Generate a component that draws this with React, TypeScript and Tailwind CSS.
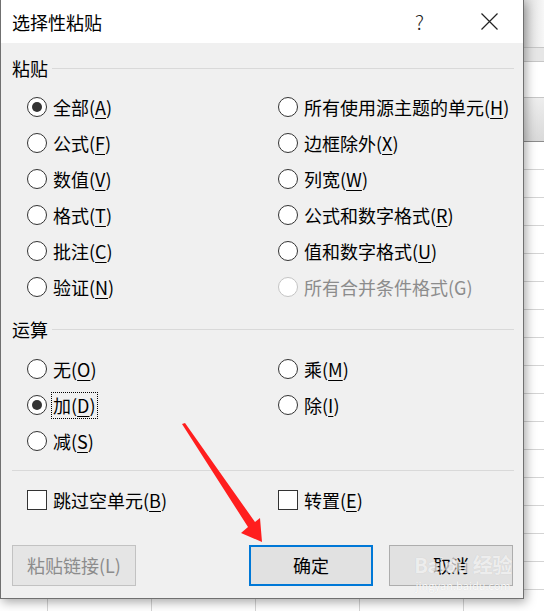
import React from 'react';

type Opt = { label: string; key?: string; checked?: boolean; disabled?: boolean; focus?: boolean };

const pasteLeft: Opt[] = [
  { label: '全部', key: 'A', checked: true },
  { label: '公式', key: 'F' },
  { label: '数值', key: 'V' },
  { label: '格式', key: 'T' },
  { label: '批注', key: 'C' },
  { label: '验证', key: 'N' },
];

const pasteRight: Opt[] = [
  { label: '所有使用源主题的单元', key: 'H' },
  { label: '边框除外', key: 'X' },
  { label: '列宽', key: 'W' },
  { label: '公式和数字格式', key: 'R' },
  { label: '值和数字格式', key: 'U' },
  { label: '所有合并条件格式(G)', disabled: true },
];

const opLeft: Opt[] = [
  { label: '无', key: 'O' },
  { label: '加', key: 'D', checked: true, focus: true },
  { label: '减', key: 'S' },
];

const opRight: Opt[] = [
  { label: '乘', key: 'M' },
  { label: '除', key: 'I' },
];

function Label({ opt }: { opt: Opt }) {
  const text = opt.key ? (
    <>
      {opt.label}(<span className="underline underline-offset-[3px] decoration-1">{opt.key}</span>)
    </>
  ) : (
    opt.label
  );
  if (opt.focus) {
    return (
      <span className="ml-[4px] px-[1px] border border-dotted border-black leading-[25px] whitespace-nowrap">
        {text}
      </span>
    );
  }
  return (
    <span className={`ml-[6px] whitespace-nowrap ${opt.disabled ? 'text-[#8c8c8c]' : 'text-black'}`}>
      {text}
    </span>
  );
}

function Radio({ opt }: { opt: Opt }) {
  return (
    <div className="h-[36px] flex items-center">
      <span
        className={`w-[20px] h-[20px] rounded-full border bg-white flex items-center justify-center shrink-0 ${
          opt.disabled ? 'border-[#c4c4c4]' : 'border-[#333333]'
        }`}
      >
        {opt.checked && <span className="w-[10px] h-[10px] rounded-full bg-[#333333]" />}
      </span>
      <Label opt={opt} />
    </div>
  );
}

function Check({ opt }: { opt: Opt }) {
  return (
    <div className="h-[36px] flex items-center">
      <span className="w-[20px] h-[20px] border border-[#333333] bg-white shrink-0" />
      <Label opt={opt} />
    </div>
  );
}

function SectionHead({ title }: { title: string }) {
  return (
    <div className="h-[24px] flex items-center">
      <span className="leading-[24px]">{title}</span>
      <span className="flex-1 h-px bg-[#d9d9d9] ml-[4px]" />
    </div>
  );
}

function Columns({ left, right }: { left: Opt[]; right: Opt[] }) {
  return (
    <div className="flex pl-[15px]">
      <div className="w-[251px] flex flex-col">
        {left.map((o) => (
          <Radio key={o.label} opt={o} />
        ))}
      </div>
      <div className="flex-1 flex flex-col">
        {right.map((o) => (
          <Radio key={o.label} opt={o} />
        ))}
      </div>
    </div>
  );
}

function Dialog() {
  return (
    <div className="relative z-10 w-[524px] h-[599px] bg-[#f0f0f0] border-x border-b border-[#707070] shadow-[2px_3px_10px_rgba(0,0,0,0.35)] flex flex-col text-[18px]">
      {/* 标题栏 */}
      <div className="h-[43px] bg-white flex items-center pl-[11px] pr-[25px] shrink-0">
        <span className="text-[18px] leading-[24px] flex-1">选择性粘贴</span>
        <span className="text-[20px] leading-[24px] font-light text-[#222] mr-[57px]">?</span>
        <svg width="17" height="17" viewBox="0 0 17 17">
          <path d="M0.5 0.5 L16.5 16.5 M16.5 0.5 L0.5 16.5" stroke="#222" strokeWidth="1.2" />
        </svg>
      </div>

      <div className="flex-1 flex flex-col pl-[11px] pr-[9px] pt-[13px]">
        <SectionHead title="粘贴" />
        <div className="mt-[9px]">
          <Columns left={pasteLeft} right={pasteRight} />
        </div>

        <div className="mt-[12px]">
          <SectionHead title="运算" />
        </div>
        <div className="mt-[10px]">
          <Columns left={opLeft} right={opRight} />
        </div>

        <div className="mt-[11px] h-px bg-[#d9d9d9]" />

        <div className="mt-[11px] flex pl-[15px]">
          <div className="w-[251px]">
            <Check opt={{ label: '跳过空单元', key: 'B' }} />
          </div>
          <Check opt={{ label: '转置', key: 'E' }} />
        </div>

        <div className="mt-[27px] flex items-center pr-[1px]">
          <button className="w-[124px] h-[41px] bg-[#e5e5e5] border border-[#c2c2c2] text-[#8c8c8c] whitespace-nowrap">
            粘贴链接(L)
          </button>
          <div className="flex-1" />
          <button className="w-[124px] h-[41px] bg-[#e1e1e1] border-2 border-[#0078d7] text-black">
            确定
          </button>
          <button className="ml-[16px] w-[124px] h-[41px] bg-[#e1e1e1] border border-[#adadad] text-black">
            取消
          </button>
        </div>
      </div>

      {/* 百度经验水印 */}
      <div className="absolute left-[412px] top-[552px] w-[100px] flex flex-col items-center pointer-events-none whitespace-nowrap">
        <span className="text-[20px] leading-[26px] font-bold text-white/70 tracking-tight [text-shadow:0_0_1px_rgba(0,0,0,0.12)]">
          Baidu 经验
        </span>
        <span className="text-[11px] leading-[14px] text-white/90 [text-shadow:0_0_1px_rgba(0,0,0,0.15)]">
          jingyan.baidu.com
        </span>
      </div>
    </div>
  );
}

function SheetStrip() {
  const rows = Array.from({ length: 16 });
  return (
    <div className="w-[20px] h-[611px] flex flex-col bg-white">
      <div className="h-[47px] bg-gradient-to-r from-[#dcdcdc] to-[#f7f7f7]" />
      <div className="h-[15px] bg-[#e6e6e6] border-y border-[#c6c6c6]" />
      <div className="h-[36px] bg-white border-b border-[#c6c6c6]" />
      <div className="h-[44px] bg-gradient-to-b from-[#eeeeee] to-[#d9d9d9] border-b border-[#8c8c8c]" />
      {rows.map((_, i) => (
        <div key={i} className="h-[28px] shrink-0 border-b border-[#d4d4d4]" />
      ))}
    </div>
  );
}

export default function App() {
  return (
    <div
      className="relative w-[544px] h-[611px] overflow-hidden bg-white flex"
      style={{ fontFamily: '"Noto Sans CJK SC", "Noto Sans", sans-serif' }}
    >
      <div className="flex flex-col">
        <Dialog />
        <div className="flex-1 flex">
          <div className="w-[48px] border-r border-[#d4d4d4]" />
          <div className="w-[104px] border-r border-[#d4d4d4]" />
          <div className="w-[104px] border-r border-[#d4d4d4]" />
          <div className="w-[104px] border-r border-[#d4d4d4]" />
          <div className="w-[104px] border-r border-[#d4d4d4]" />
        </div>
      </div>
      <SheetStrip />

      {/* 红色箭头 */}
      <svg className="absolute left-0 top-0 z-20 pointer-events-none" width="544" height="611">
        <polygon
          points="182,424 185,423 255,522 260,518 262,542 241,533 248,527"
          fill="#ff1e1e"
        />
      </svg>
    </div>
  );
}
